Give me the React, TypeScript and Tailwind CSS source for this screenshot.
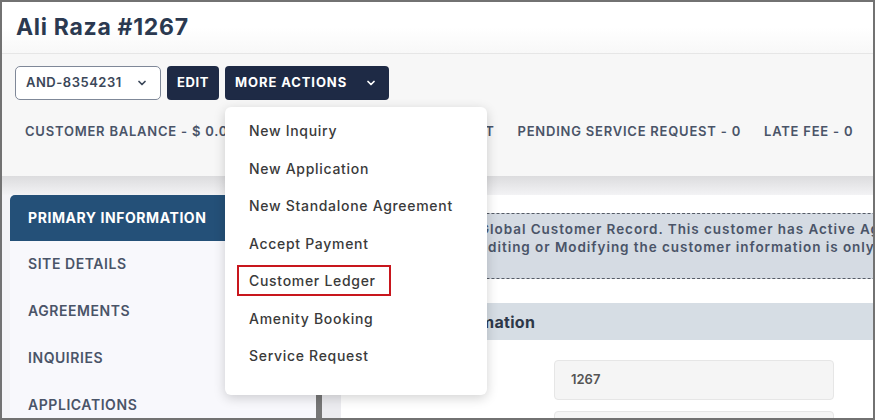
import { ChevronDown } from 'lucide-react';

const menuItems = [
  'New Inquiry',
  'New Application',
  'New Standalone Agreement',
  'Accept Payment',
  'Customer Ledger',
  'Amenity Booking',
  'Service Request',
];

const tabs = ['PRIMARY INFORMATION', 'SITE DETAILS', 'AGREEMENTS', 'INQUIRIES', 'APPLICATIONS'];

export default function App() {
  return (
    <div className="relative w-[875px] h-[420px] overflow-hidden border-2 border-[#727272] bg-white font-['Inter',sans-serif]">
      {/* header */}
      <div className="h-[52px] flex items-center pl-[14px] bg-gradient-to-b from-white via-white to-[#f8f8f8] border-b border-[#e6e6e6]">
        <h1 className="text-[23px] font-bold tracking-[0.03em] text-[#2b3950]">Ali Raza #1267</h1>
      </div>

      {/* action panel */}
      <div className="h-[122px] bg-[#f7f7f7] pt-[12px]">
        <div className="flex gap-[6px] pl-[13px]">
          <button className="w-[146px] h-[34px] flex items-center justify-between pl-[10px] pr-[12px] bg-white border border-[#7f8898] rounded-[5px] text-[13px] font-semibold tracking-[0.04em] text-[#3b4759]">
            AND-8354231
            <ChevronDown className="w-[12px] h-[12px]" strokeWidth={3.5} />
          </button>
          <button className="w-[52px] h-[34px] bg-[#1e2a45] rounded-[4px] text-white text-[13px] font-bold tracking-[0.05em]">EDIT</button>
          <button className="w-[164px] h-[34px] flex items-center gap-[18px] pl-[10px] bg-[#1e2a45] rounded-[4px] text-white text-[13px] font-bold tracking-[0.07em]">
            MORE ACTIONS
            <ChevronDown className="w-[12px] h-[12px]" strokeWidth={3.5} />
          </button>
        </div>
        <div className="mt-[22px] pl-[23px] flex gap-[23px] text-[13px] font-semibold tracking-[0.06em] text-[#4a5468] whitespace-nowrap">
          <span>CUSTOMER BALANCE - $ 0.00</span>
          <span className="flex-none w-[234px] text-right">ACTIVE AGREEMENT</span>
          <span>PENDING SERVICE REQUEST - 0</span>
          <span>LATE FEE - 0</span>
        </div>
      </div>

      {/* shadow band */}
      <div className="h-[19px] bg-gradient-to-b from-[#dcdcde] to-[#f3f3f5]" />

      {/* body */}
      <div className="flex h-[230px] bg-[#f4f4f7]">
        <div className="ml-[8px] w-[306px] bg-[#f8f8fc]">
          {tabs.map((t, i) => (
            <div
              key={t}
              className={
                i === 0
                  ? 'h-[46px] flex items-center pl-[18px] pb-[2px] bg-[#245078] rounded-tl-[5px] text-white text-[14px] font-bold tracking-[0.04em]'
                  : 'h-[47px] flex items-center pl-[18px] pb-[2px] text-[#4a5468] text-[14px] font-semibold tracking-[0.04em]'
              }
            >
              {t}
            </div>
          ))}
        </div>
        <div className="w-[6px] bg-[#777777]" />
        <div className="w-[19px] bg-[#ececf0]" />
        <div className="flex-1 bg-white pt-[18px] overflow-hidden">
          <div className="ml-[10px] w-[640px] h-[66px] bg-[#d5dbe3] border border-dashed border-[#555b66] pl-[127px] pt-[6px] text-[13.5px] leading-[18px] font-semibold tracking-[0.07em] text-[#4a5468] whitespace-nowrap">
            <div>Global Customer Record. This customer has Active Agreements in multiple sites.</div>
            <div>Editing or Modifying the customer information is only allowed from Global view.</div>
          </div>
          <div className="mt-[24px] h-[37px] flex items-center pl-[32px] bg-[#d6dde4] text-[16px] font-bold tracking-[0.02em] text-[#2d3748]">
            Primary Information
          </div>
          <div className="mt-[20px] flex items-center">
            <div className="w-[213px] pl-[40px] text-[13px] font-semibold text-[#4a5468]">Customer ID</div>
            <div className="w-[280px] h-[40px] flex items-center pl-[16px] bg-[#f5f5f5] border border-[#e6e6e6] rounded-[4px] text-[13px] font-semibold text-[#555]">
              1267
            </div>
          </div>
          <div className="mt-[11px] flex items-center">
            <div className="w-[213px] pl-[40px] text-[13px] font-semibold text-[#4a5468]">First Name</div>
            <div className="w-[280px] h-[40px] bg-[#f5f5f5] border border-[#e6e6e6] rounded-[4px]" />
          </div>
        </div>
      </div>

      {/* more actions menu */}
      <div className="absolute left-[223px] top-[105px] w-[262px] h-[288px] pt-[5px] bg-white rounded-[6px] shadow-[0_3px_12px_rgba(0,0,0,0.18)]">
        {menuItems.map((m) =>
          m === 'Customer Ledger' ? (
            <div key={m} className="h-[37.5px] flex items-center pl-[12px]">
              <div className="w-[154px] h-[31px] flex items-center pl-[10px] border-2 border-[#c8161d] text-[14px] font-medium tracking-[0.05em] text-[#3a3a3a]">
                {m}
              </div>
            </div>
          ) : (
            <div key={m} className="h-[37.5px] flex items-center pl-[24px] text-[14px] font-medium tracking-[0.05em] text-[#3a3a3a]">
              {m}
            </div>
          )
        )}
      </div>
    </div>
  );
}
